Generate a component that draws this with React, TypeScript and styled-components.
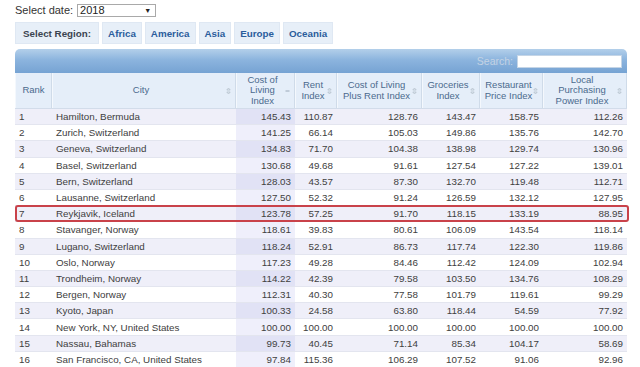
import React from "react";
import styled, { createGlobalStyle } from "styled-components";

const GlobalStyle = createGlobalStyle`
  html, body {
    margin: 0;
    padding: 0;
    background: #ffffff;
    font-family: "Liberation Sans", Arial, sans-serif;
    color: #333333;
  }
`;

type Row = {
  rank: number;
  city: string;
  values: string[];
  mark?: boolean;
};

const rows: Row[] = [
  { rank: 1, city: "Hamilton, Bermuda", values: ["145.43", "110.87", "128.76", "143.47", "158.75", "112.26"] },
  { rank: 2, city: "Zurich, Switzerland", values: ["141.25", "66.14", "105.03", "149.86", "135.76", "142.70"] },
  { rank: 3, city: "Geneva, Switzerland", values: ["134.83", "71.70", "104.38", "138.98", "129.74", "130.96"] },
  { rank: 4, city: "Basel, Switzerland", values: ["130.68", "49.68", "91.61", "127.54", "127.22", "139.01"] },
  { rank: 5, city: "Bern, Switzerland", values: ["128.03", "43.57", "87.30", "132.70", "119.48", "112.71"] },
  { rank: 6, city: "Lausanne, Switzerland", values: ["127.50", "52.32", "91.24", "126.59", "132.12", "127.95"] },
  { rank: 7, city: "Reykjavik, Iceland", values: ["123.78", "57.25", "91.70", "118.15", "133.19", "88.95"], mark: true },
  { rank: 8, city: "Stavanger, Norway", values: ["118.61", "39.83", "80.61", "106.09", "143.54", "118.14"] },
  { rank: 9, city: "Lugano, Switzerland", values: ["118.24", "52.91", "86.73", "117.74", "122.30", "119.86"] },
  { rank: 10, city: "Oslo, Norway", values: ["117.23", "49.28", "84.46", "112.42", "124.09", "102.94"] },
  { rank: 11, city: "Trondheim, Norway", values: ["114.22", "42.39", "79.58", "103.50", "134.76", "108.29"] },
  { rank: 12, city: "Bergen, Norway", values: ["112.31", "40.30", "77.58", "101.79", "119.61", "99.29"] },
  { rank: 13, city: "Kyoto, Japan", values: ["100.33", "24.58", "63.80", "118.44", "54.59", "77.92"] },
  { rank: 14, city: "New York, NY, United States", values: ["100.00", "100.00", "100.00", "100.00", "100.00", "100.00"] },
  { rank: 15, city: "Nassau, Bahamas", values: ["99.73", "40.45", "71.14", "85.34", "104.17", "58.69"] },
  { rank: 16, city: "San Francisco, CA, United States", values: ["97.84", "115.36", "106.29", "107.52", "91.06", "92.96"] },
];

const columns = [
  { label: ["Rank"], sort: false },
  { label: ["City"], sort: true },
  { label: ["Cost of", "Living", "Index"], sort: true, active: true },
  { label: ["Rent", "Index"], sort: true },
  { label: ["Cost of Living", "Plus Rent Index"], sort: true },
  { label: ["Groceries", "Index"], sort: true },
  { label: ["Restaurant", "Price Index"], sort: true },
  { label: ["Local", "Purchasing", "Power Index"], sort: true },
];

const regions = ["Africa", "America", "Asia", "Europe", "Oceania"];

const GRID = "37px 184px 59px 42px 85px 58px 63px 84px";

const Page = styled.div`
  padding: 2px 13px 0 15px;
  width: 612px;
`;

const DateLine = styled.div`
  display: flex;
  align-items: center;
  gap: 4px;
  height: 16px;
  font-size: 11px;
  color: #333;
`;

const FakeSelect = styled.div`
  width: 79px;
  height: 13px;
  border: 1px solid #a9a9a9;
  display: flex;
  align-items: center;
  justify-content: space-between;
  padding: 0 4px 0 2px;
  box-sizing: border-box;
  font-size: 11px;
  color: #222;
  background: #fff;
`;

const Caret = styled.span`
  font-size: 7px;
  color: #222;
`;

const RegionBar = styled.div`
  display: flex;
  gap: 3px;
  margin-top: 4px;
  height: 22px;
`;

const RegionButton = styled.div<{ $label?: boolean }>`
  display: flex;
  align-items: center;
  padding: 0 ${({ $label }) => ($label ? "7px" : "5px")};
  background: #e7eff8;
  border: 1px solid #dfe8f3;
  font-size: 9.8px;
  font-weight: bold;
  color: ${({ $label }) => ($label ? "#3b4450" : "#2b5d9c")};
  box-sizing: border-box;
`;

const TableBox = styled.div`
  margin-top: 5px;
  width: 612px;
`;

const TopBand = styled.div`
  height: 24px;
  border-radius: 5px 5px 0 0;
  background: linear-gradient(#b3cfea 0%, #8cb4de 45%, #76a3d3 100%);
  display: flex;
  align-items: center;
  justify-content: flex-end;
  padding-right: 5px;
  gap: 4px;
`;

const SearchLabel = styled.span`
  font-size: 10.5px;
  color: #c4d3e4;
`;

const SearchInput = styled.div`
  width: 105px;
  height: 13px;
  background: #fff;
  border: 1px solid #c5d5e6;
  box-sizing: border-box;
`;

const HeadRow = styled.div`
  display: grid;
  grid-template-columns: ${GRID};
  height: 36px;
  background: #e5eef9;
  border-bottom: 1px solid #d2dcea;
  box-sizing: border-box;
`;

const HeadCell = styled.div`
  position: relative;
  display: flex;
  flex-direction: column;
  align-items: center;
  justify-content: center;
  font-size: 9.5px;
  line-height: 10.5px;
  color: #4b6a8d;
  text-align: center;
  border-left: 1px solid #f4f8fd;
  border-right: 1px solid #cfdbe9;
  padding-right: 6px;
  &:first-child {
    padding-right: 0;
  }
`;

const SortIcon = styled.svg`
  position: absolute;
  right: 4px;
  top: 50%;
  margin-top: -4px;
`;

const BodyRow = styled.div<{ $odd: boolean; $mark?: boolean }>`
  position: relative;
  display: grid;
  grid-template-columns: ${GRID};
  height: 16.2px;
  background: ${({ $odd }) => ($odd ? "#efeff9" : "#ffffff")};
  border-bottom: 1px solid #e3e5ef;
  box-sizing: border-box;
  font-size: 9.8px;
  color: #404040;
  &::after {
    content: "";
    display: ${({ $mark }) => ($mark ? "block" : "none")};
    position: absolute;
    left: 0;
    right: -2px;
    top: -1px;
    bottom: -1px;
    border: 2px solid #c9424a;
    border-radius: 3px;
    pointer-events: none;
  }
`;

const Cell = styled.div<{ $align?: "left" | "right"; $sorted?: boolean; $odd?: boolean }>`
  display: flex;
  align-items: center;
  justify-content: ${({ $align }) => ($align === "left" ? "flex-start" : "flex-end")};
  padding: ${({ $align }) => ($align === "left" ? "0 0 0 4px" : "0 4px 0 0")};
  white-space: nowrap;
  overflow: hidden;
  background: ${({ $sorted, $odd }) =>
    $sorted ? ($odd ? "#e1e2f5" : "#efeffb") : "transparent"};
`;

const SortMark: React.FC<{ active?: boolean }> = ({ active }) => (
  <SortIcon width="5" height="8" viewBox="0 0 5 8">
    {active ? (
      <path d="M0.5 4 L4.5 4" stroke="#9aa8b8" strokeWidth="1" />
    ) : (
      <g fill="none" stroke="#b5c0cc" strokeWidth="0.8">
        <path d="M0.8 3 L2.5 1 L4.2 3 Z" />
        <path d="M0.8 5 L2.5 7 L4.2 5 Z" />
      </g>
    )}
  </SortIcon>
);

export default function App() {
  return (
    <>
      <GlobalStyle />
      <Page>
        <DateLine>
          <span>Select date:</span>
          <FakeSelect>
            <span>2018</span>
            <Caret>▼</Caret>
          </FakeSelect>
        </DateLine>
        <RegionBar>
          <RegionButton $label>Select Region:</RegionButton>
          {regions.map((r) => (
            <RegionButton key={r}>{r}</RegionButton>
          ))}
        </RegionBar>
        <TableBox>
          <TopBand>
            <SearchLabel>Search:</SearchLabel>
            <SearchInput />
          </TopBand>
          <HeadRow>
            {columns.map((c, i) => (
              <HeadCell key={i}>
                {c.label.map((l) => (
                  <span key={l}>{l}</span>
                ))}
                {c.sort && <SortMark active={c.active} />}
              </HeadCell>
            ))}
          </HeadRow>
          {rows.map((r, i) => {
            const odd = i % 2 === 0;
            return (
              <BodyRow key={r.rank} $odd={odd} $mark={r.mark}>
                <Cell $align="left">{r.rank}</Cell>
                <Cell $align="left">{r.city}</Cell>
                {r.values.map((v, j) => (
                  <Cell key={j} $align="right" $sorted={j === 0} $odd={odd}>
                    {v}
                  </Cell>
                ))}
              </BodyRow>
            );
          })}
        </TableBox>
      </Page>
    </>
  );
}
